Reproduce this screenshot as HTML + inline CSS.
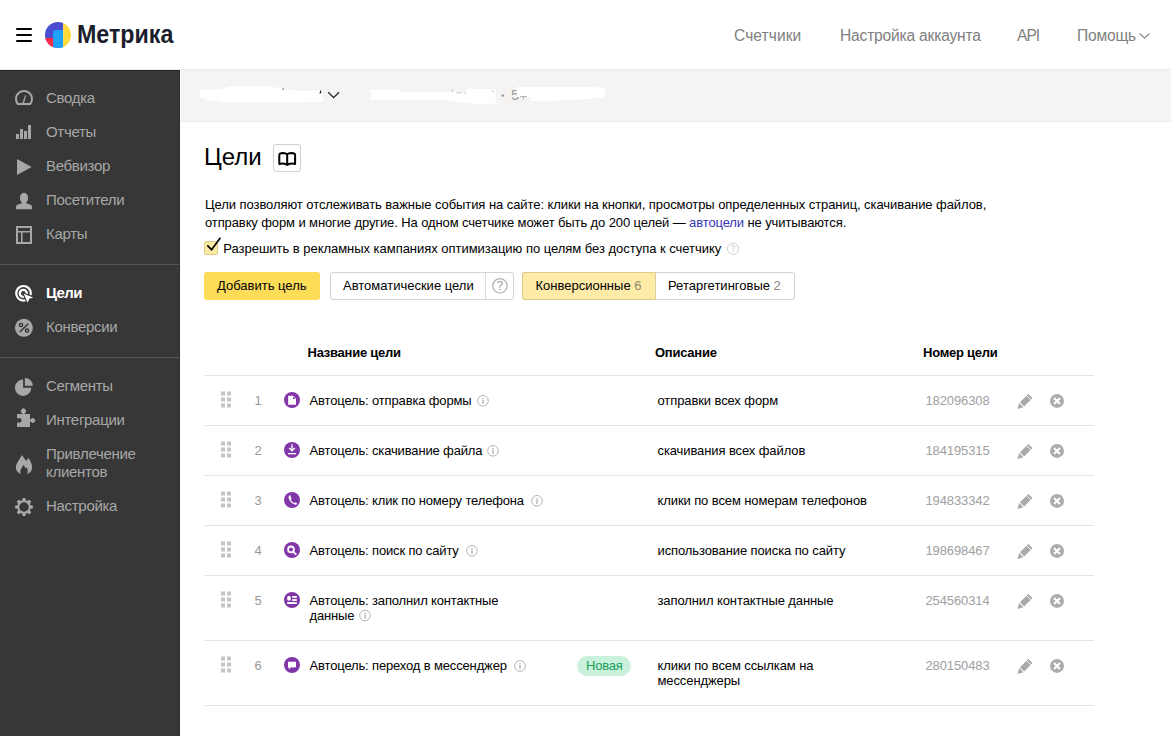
<!DOCTYPE html>
<html><head><meta charset="utf-8"><style>
html,body{margin:0;padding:0;width:1171px;height:736px;overflow:hidden;background:#fff;}
body{position:relative;font-family:"Liberation Sans",sans-serif;}
.t{position:absolute;white-space:nowrap;}
.r{position:absolute;}
svg{position:absolute;left:0;top:0;}
</style></head><body>
<div class="r" style="left:0;top:69px;width:1171px;height:1px;background:#e9e9e9"></div>
<div class="r" style="left:0;top:70px;width:180px;height:666px;background:#373737"></div>
<div class="r" style="left:0;top:70px;width:180px;height:1px;background:#262626"></div>
<div class="r" style="left:179px;top:70px;width:1px;height:666px;background:#2e2e2e"></div>
<div class="r" style="left:181px;top:70px;width:990px;height:51px;background:#f5f4f2"></div>
<div class="r" style="left:181px;top:121px;width:990px;height:1px;background:#ebebeb"></div>
<div class="r" style="left:0;top:264px;width:179px;height:1px;background:#565656"></div>
<div class="r" style="left:0;top:357px;width:179px;height:1px;background:#565656"></div>
<div class="t" style="left:77px;top:19.37px;font-size:26.5px;line-height:30.5px;color:#1b1e2a;font-weight:700;transform:scaleX(0.877);transform-origin:0 0;">Метрика</div>
<div class="t" style="left:734px;top:25.99px;font-size:15.6px;line-height:19.6px;color:#808080;letter-spacing:0.05px;">Счетчики</div>
<div class="t" style="left:840px;top:25.99px;font-size:15.6px;line-height:19.6px;color:#808080;letter-spacing:-0.2px;">Настройка аккаунта</div>
<div class="t" style="left:1017px;top:25.99px;font-size:15.6px;line-height:19.6px;color:#808080;letter-spacing:-1px;">API</div>
<div class="t" style="left:1077px;top:25.99px;font-size:15.6px;line-height:19.6px;color:#808080;letter-spacing:-0.2px;">Помощь</div>
<div class="t" style="left:46px;top:88.30px;font-size:15px;line-height:19px;color:#a7a7a7;letter-spacing:-0.3px;">Сводка</div>
<div class="t" style="left:46px;top:122.30px;font-size:15px;line-height:19px;color:#a7a7a7;letter-spacing:-0.3px;">Отчеты</div>
<div class="t" style="left:46px;top:156.30px;font-size:15px;line-height:19px;color:#a7a7a7;letter-spacing:-0.3px;">Вебвизор</div>
<div class="t" style="left:46px;top:190.30px;font-size:15px;line-height:19px;color:#a7a7a7;letter-spacing:-0.3px;">Посетители</div>
<div class="t" style="left:46px;top:224.30px;font-size:15px;line-height:19px;color:#a7a7a7;letter-spacing:-0.3px;">Карты</div>
<div class="t" style="left:46px;top:317.30px;font-size:15px;line-height:19px;color:#a7a7a7;letter-spacing:-0.3px;">Конверсии</div>
<div class="t" style="left:46px;top:376.30px;font-size:15px;line-height:19px;color:#a7a7a7;letter-spacing:-0.3px;">Сегменты</div>
<div class="t" style="left:46px;top:410.30px;font-size:15px;line-height:19px;color:#a7a7a7;letter-spacing:-0.3px;">Интеграции</div>
<div class="t" style="left:46px;top:443.80px;font-size:15px;line-height:19px;color:#a7a7a7;letter-spacing:-0.3px;">Привлечение</div>
<div class="t" style="left:46px;top:461.80px;font-size:15px;line-height:19px;color:#a7a7a7;letter-spacing:-0.3px;">клиентов</div>
<div class="t" style="left:46px;top:496.30px;font-size:15px;line-height:19px;color:#a7a7a7;letter-spacing:-0.3px;">Настройка</div>
<div class="t" style="left:46px;top:282.80px;font-size:15px;line-height:19px;color:#fff;font-weight:700;letter-spacing:-0.6px;">Цели</div>
<div class="t" style="left:511px;top:85.10px;font-size:15px;line-height:19px;color:#9c9c9c;">5</div>
<div class="t" style="left:204px;top:143.18px;font-size:24px;line-height:28px;color:#000;">Цели</div>
<div class="r" style="left:273px;top:144px;width:26px;height:26px;border:1px solid #d0d0d0;border-radius:3px;"></div>
<div class="t" style="left:205px;top:196.00px;font-size:13px;line-height:17px;color:#000;letter-spacing:-0.07px;">Цели позволяют отслеживать важные события на сайте: клики на кнопки, просмотры определенных страниц, скачивание файлов,</div>
<div class="t" style="left:205px;top:213.50px;font-size:13px;line-height:17px;color:#000;letter-spacing:-0.11px;">отправку форм и многие другие. На одном счетчике может быть до 200 целей — <span style="color:#3436b4">автоцели</span> не учитываются.</div>
<div class="r" style="left:204px;top:241px;width:12px;height:12px;border:1px solid #dccb86;border-radius:2px;background:#fdeaa4"></div>
<div class="t" style="left:223.3px;top:240.00px;font-size:13px;line-height:17px;color:#000;letter-spacing:-0.03px;">Разрешить в рекламных кампаниях оптимизацию по целям без доступа к счетчику</div>
<div class="r" style="left:204px;top:272px;width:116px;height:28px;background:#fddc58;border-radius:3px"></div>
<div class="t" style="left:217px;top:276.50px;font-size:13px;line-height:17px;color:#000;">Добавить цель</div>
<div class="r" style="left:330px;top:272px;width:182px;height:26px;border:1px solid #d3d3d3;border-radius:3px"></div>
<div class="r" style="left:485px;top:273px;width:1px;height:26px;background:#dcdcdc"></div>
<div class="t" style="left:343px;top:276.50px;font-size:13px;line-height:17px;color:#000;">Автоматические цели</div>
<div class="r" style="left:522px;top:272px;width:271px;height:26px;border:1px solid #d3d3d3;border-radius:3px;overflow:hidden"><div style="position:absolute;left:0;top:0;width:133px;height:26px;background:#feeba8;"></div></div>
<div class="r" style="left:522px;top:272px;width:134px;height:28px;border-radius:3px 0 0 3px;box-sizing:border-box;border:1px solid #dccb8c;border-right:1px solid #d8cf9f;background:#feeba8"></div>
<div class="t" style="left:535.5px;top:276.50px;font-size:13px;line-height:17px;color:#000;">Конверсионные <span style="color:#8a8a6a">6</span></div>
<div class="t" style="left:668px;top:276.50px;font-size:13px;line-height:17px;color:#000;">Ретаргетинговые <span style="color:#888">2</span></div>
<div class="t" style="left:307.5px;top:343.80px;font-size:13px;line-height:17px;color:#000;font-weight:700;letter-spacing:-0.25px;">Название цели</div>
<div class="t" style="left:655px;top:343.80px;font-size:13px;line-height:17px;color:#000;font-weight:700;letter-spacing:-0.25px;">Описание</div>
<div class="t" style="left:923px;top:343.80px;font-size:13px;line-height:17px;color:#000;font-weight:700;letter-spacing:-0.25px;">Номер цели</div>
<div class="r" style="left:204px;top:375px;width:890px;height:1px;background:#e4e4e4"></div>
<div class="r" style="left:204px;top:425px;width:890px;height:1px;background:#e4e4e4"></div>
<div class="r" style="left:204px;top:475px;width:890px;height:1px;background:#e4e4e4"></div>
<div class="r" style="left:204px;top:525px;width:890px;height:1px;background:#e4e4e4"></div>
<div class="r" style="left:204px;top:575px;width:890px;height:1px;background:#e4e4e4"></div>
<div class="r" style="left:204px;top:640px;width:890px;height:1px;background:#e4e4e4"></div>
<div class="r" style="left:204px;top:705px;width:890px;height:1px;background:#e4e4e4"></div>
<div class="t" style="left:254.5px;top:392.00px;font-size:13px;line-height:17px;color:#999;">1</div>
<div class="t" style="left:309.5px;top:392.00px;font-size:13px;line-height:17px;color:#000;letter-spacing:-0.15px;">Автоцель: отправка формы</div>
<div class="t" style="left:657.5px;top:392.00px;font-size:13px;line-height:17px;color:#000;letter-spacing:-0.1px;">отправки всех форм</div>
<div class="t" style="left:925.5px;top:392.00px;font-size:13px;line-height:17px;color:#a0a0a0;letter-spacing:-0.12px;">182096308</div>
<div class="t" style="left:254.5px;top:442.00px;font-size:13px;line-height:17px;color:#999;">2</div>
<div class="t" style="left:309.5px;top:442.00px;font-size:13px;line-height:17px;color:#000;letter-spacing:-0.15px;">Автоцель: скачивание файла</div>
<div class="t" style="left:657.5px;top:442.00px;font-size:13px;line-height:17px;color:#000;letter-spacing:-0.1px;">скачивания всех файлов</div>
<div class="t" style="left:925.5px;top:442.00px;font-size:13px;line-height:17px;color:#a0a0a0;letter-spacing:-0.12px;">184195315</div>
<div class="t" style="left:254.5px;top:492.00px;font-size:13px;line-height:17px;color:#999;">3</div>
<div class="t" style="left:309.5px;top:492.00px;font-size:13px;line-height:17px;color:#000;letter-spacing:-0.15px;">Автоцель: клик по номеру телефона</div>
<div class="t" style="left:657.5px;top:492.00px;font-size:13px;line-height:17px;color:#000;letter-spacing:-0.1px;">клики по всем номерам телефонов</div>
<div class="t" style="left:925.5px;top:492.00px;font-size:13px;line-height:17px;color:#a0a0a0;letter-spacing:-0.12px;">194833342</div>
<div class="t" style="left:254.5px;top:542.00px;font-size:13px;line-height:17px;color:#999;">4</div>
<div class="t" style="left:309.5px;top:542.00px;font-size:13px;line-height:17px;color:#000;letter-spacing:-0.15px;">Автоцель: поиск по сайту</div>
<div class="t" style="left:657.5px;top:542.00px;font-size:13px;line-height:17px;color:#000;letter-spacing:-0.1px;">использование поиска по сайту</div>
<div class="t" style="left:925.5px;top:542.00px;font-size:13px;line-height:17px;color:#a0a0a0;letter-spacing:-0.12px;">198698467</div>
<div class="t" style="left:254.5px;top:592.00px;font-size:13px;line-height:17px;color:#999;">5</div>
<div class="t" style="left:309.5px;top:592.00px;font-size:13px;line-height:17px;color:#000;letter-spacing:-0.15px;">Автоцель: заполнил контактные</div>
<div class="t" style="left:309.5px;top:607.00px;font-size:13px;line-height:17px;color:#000;letter-spacing:-0.15px;">данные</div>
<div class="t" style="left:657.5px;top:592.00px;font-size:13px;line-height:17px;color:#000;letter-spacing:-0.1px;">заполнил контактные данные</div>
<div class="t" style="left:925.5px;top:592.00px;font-size:13px;line-height:17px;color:#a0a0a0;letter-spacing:-0.12px;">254560314</div>
<div class="t" style="left:254.5px;top:657.00px;font-size:13px;line-height:17px;color:#999;">6</div>
<div class="t" style="left:309.5px;top:657.00px;font-size:13px;line-height:17px;color:#000;letter-spacing:-0.15px;">Автоцель: переход в мессенджер</div>
<div class="t" style="left:657.5px;top:657.00px;font-size:13px;line-height:17px;color:#000;letter-spacing:-0.1px;">клики по всем ссылкам на</div>
<div class="t" style="left:657.5px;top:672.00px;font-size:13px;line-height:17px;color:#000;letter-spacing:-0.1px;">мессенджеры</div>
<div class="t" style="left:925.5px;top:657.00px;font-size:13px;line-height:17px;color:#a0a0a0;letter-spacing:-0.12px;">280150483</div>
<div class="r" style="left:577px;top:656px;width:54px;height:20px;border-radius:10px;background:#c9f1dc"></div>
<div class="t" style="left:586px;top:656.70px;font-size:13px;line-height:17px;color:#1aa05b;letter-spacing:-0.2px;">Новая</div>
<svg width="1171" height="736" viewBox="0 0 1171 736"><rect x="16" y="28" width="16" height="2" rx="1" fill="#000"/><rect x="16" y="34" width="16" height="2" rx="1" fill="#000"/><rect x="16" y="40" width="16" height="2" rx="1" fill="#000"/><defs><clipPath id="lc"><circle cx="58" cy="35" r="13"/></clipPath></defs><g clip-path="url(#lc)"><rect x="45" y="22" width="18" height="26" fill="#4a4cd2"/><rect x="45" y="38" width="8.3" height="10" fill="#ff2a44"/><path d="M53.1,33 Q53.1,30 56,30 L63.1,30 L63.1,48 L53.1,48 Z" fill="#1ea2f7"/><rect x="63.1" y="22" width="9" height="26" fill="#ffd83a"/></g><path d="M1139.5,33.5 L1144.5,38 L1149.5,33.5" fill="none" stroke="#888" stroke-width="1.1"/><path d="M17.8,104 A8,8 0 1 1 30.2,104 Z" fill="none" stroke="#a7a7a7" stroke-width="2"/><path d="M22.2,103.5 L25.2,95 L26,95.4 L24,103.5 Z" fill="#a7a7a7"/><rect x="16" y="134" width="3" height="5" fill="#a7a7a7"/><rect x="20" y="129" width="3" height="10" fill="#a7a7a7"/><rect x="24" y="131" width="3" height="8" fill="#a7a7a7"/><rect x="28" y="125" width="3" height="14" fill="#a7a7a7"/><path d="M17,159 L17,175 L31.7,167 Z" fill="#a7a7a7"/><ellipse cx="24" cy="198" rx="4.1" ry="5.2" fill="#a7a7a7"/><path d="M16,209.2 L16,207 Q16,204.6 19.5,204 L22,203 L26,203 L28.5,204 Q32,204.6 32,207 L32,209.2 Z" fill="#a7a7a7"/><rect x="17" y="227" width="14" height="16" fill="none" stroke="#a7a7a7" stroke-width="2"/><rect x="18" y="231" width="12" height="1.5" fill="#a7a7a7"/><rect x="21" y="232" width="1.5" height="10" fill="#a7a7a7"/><circle cx="23.5" cy="293.3" r="7.3" fill="none" stroke="#fff" stroke-width="2.2"/><circle cx="23.3" cy="293.4" r="3.5" fill="none" stroke="#fff" stroke-width="2.4"/><path d="M23.7,293.8 L33.2,297.4 L29.3,298.8 L27.6,302.8 Z" fill="#fff" stroke="#373737" stroke-width="2.2" stroke-linejoin="round"/><path d="M23.7,293.8 L33.2,297.4 L29.3,298.8 L27.6,302.8 Z" fill="#fff"/><circle cx="23.9" cy="327.8" r="9" fill="#a7a7a7"/><circle cx="21" cy="325" r="1.6" fill="none" stroke="#373737" stroke-width="1.4"/><circle cx="27" cy="330.6" r="1.6" fill="none" stroke="#373737" stroke-width="1.4"/><path d="M19.8,332 L28.2,323.8" stroke="#373737" stroke-width="1.5"/><path d="M23.1,387.7 L23.1,379.5 A8.2,8.2 0 1 0 31.3,387.7 Z" fill="#a7a7a7"/><path d="M24.9,385.8 L24.9,377.9 A7.9,7.9 0 0 1 32.8,385.8 Z" fill="#a7a7a7"/><path d="M17,414 L22.2,414 L22.2,413.2 A2.5,2.5 0 1 1 24.7,413.2 L24.7,414 L30,414 L30,419.2 L30.8,419.2 A2.3,2.3 0 1 1 30.8,421.6 L30,421.6 L30,427 L17,427 L17,422.6 L18.6,422.6 A2.3,2.3 0 1 0 18.6,418.2 L17,418.2 Z" fill="#a7a7a7"/><path d="M21.8,455 C23.5,457.5 25.5,459.5 26.2,461 C27.2,459.8 27.8,458.8 28.4,458 C30.5,460.5 32.2,464 32.1,467.5 C32,471 30.2,473 27.2,474 C28,471.5 27.8,469 26.6,467.3 C26.2,468.2 25.8,468.4 25.2,468.2 C24.8,466.5 24,465.3 23.3,465 C22.5,466.8 20.6,469 20.4,471 C20.3,472.3 20.8,473.4 21.3,474 C17.8,473.2 15.9,470.6 15.9,467.5 C15.9,463 19.8,459.8 21.8,455 Z" fill="#a7a7a7"/><path d="M21.91,500.74 L22.71,498.09 L25.29,498.09 L26.09,500.74 L26.95,501.10 L29.39,499.79 L31.21,501.61 L29.90,504.05 L30.26,504.91 L32.91,505.71 L32.91,508.29 L30.26,509.09 L29.90,509.95 L31.21,512.39 L29.39,514.21 L26.95,512.90 L26.09,513.26 L25.29,515.91 L22.71,515.91 L21.91,513.26 L21.05,512.90 L18.61,514.21 L16.79,512.39 L18.10,509.95 L17.74,509.09 L15.09,508.29 L15.09,505.71 L17.74,504.91 L18.10,504.05 L16.79,501.61 L18.61,499.79 L21.05,501.10Z" fill="#a7a7a7"/><circle cx="24" cy="507" r="4.7" fill="#373737"/><path d="M328.2,92.2 L333.6,97.6 L339,92.2" fill="none" stroke="#222" stroke-width="1.3"/><path d="M200,89.6 L222,89.6 L222,88.5 L227,88.5 L227,86.8 L236,86.8 L236,86 L265,85.8 L298,90.9 L323,91 L323,102 L218,102.2 L218,100.5 L205,100.5 L205,97.8 L200,97.8 Z" fill="#fff"/><path d="M370.8,89.6 L400,89.6 L400,92 L467,92 L467,88.9 L495.7,88.9 L495.7,103.7 L474,103.7 L458,102 L446.8,100.3 L440,99.8 L370.8,99.8 Z" fill="#fff"/><path d="M516.7,87 L597,87 L597,88 L605,88 L605,97.4 L592,97.4 L592,98.8 L575,99.7 L555,100.7 L531,100.7 L531,96.9 L516.7,96.9 Z" fill="#fff"/><circle cx="502.8" cy="95.6" r="1.3" fill="#9c9c9c"/><path d="M520,96.6 L527,96.6 M523.5,96.6 L523.5,99.5" stroke="#b0b0b0" stroke-width="1"/><path d="M452.5,89 L452.5,92 M456,92.8 L462,92.8 M464,92.8 L466,93.5" stroke="#c8c8c8" stroke-width="1"/><path d="M491.5,90 L494,92.5" stroke="#b8b8b8" stroke-width="0.9"/><rect x="282.5" y="88.5" width="1.2" height="1.2" fill="#333"/><path d="M319.5,92.8 L321.5,92.8 M320.5,90.5 L320.5,92.8" stroke="#222" stroke-width="1"/><path d="M279.3,155 Q279.3,153.1 283,153 Q286,153 287.2,154.5 Q288.4,153 291.4,153 Q295.1,153.1 295.1,155 L295.1,164 Q291,162.9 287.2,164.9 Q283.4,162.9 279.3,164 Z M287.2,154.5 L287.2,164.9" fill="none" stroke="#000" stroke-width="2" stroke-linejoin="round"/><path d="M207.3,245.4 L211.6,249.7 L220.4,237.8" fill="none" stroke="#000" stroke-width="1.7"/><circle cx="733" cy="248.8" r="5.6" fill="none" stroke="#d2d2d2" stroke-width="1"/><path d="M731.2,247 Q731.4,245.6 733.1,245.6 Q734.8,245.6 734.8,247 Q734.8,248 733.5,248.6 L733,249.1 L733,250.2" fill="none" stroke="#cdcdcd" stroke-width="1"/><rect x="732.4" y="251" width="1.2" height="1" fill="#cdcdcd"/><circle cx="499.9" cy="285.8" r="7.2" fill="none" stroke="#b3b3b3" stroke-width="1.2"/><path d="M497.5,283.2 Q497.8,281.4 500.1,281.4 Q502.4,281.4 502.4,283.2 Q502.4,284.5 500.8,285.3 L499.9,286 L499.9,287.8" fill="none" stroke="#aaa" stroke-width="1.2"/><rect x="499.2" y="289" width="1.5" height="1.3" fill="#aaa"/><rect x="221" y="391.5" width="4" height="4" fill="#c4c4c4"/><rect x="221" y="397.5" width="4" height="4" fill="#c4c4c4"/><rect x="221" y="403.5" width="4" height="4" fill="#c4c4c4"/><rect x="227" y="391.5" width="4" height="4" fill="#c4c4c4"/><rect x="227" y="397.5" width="4" height="4" fill="#c4c4c4"/><rect x="227" y="403.5" width="4" height="4" fill="#c4c4c4"/><circle cx="292" cy="400" r="8" fill="#8237a8"/><g transform="translate(0,0.39999999999997726)"><path d="M1017.5,408.6 L1019.2,402.6 L1023.4,406.8 Z M1020,401.8 L1028.3,393.5 L1032.5,397.7 L1024.2,406 Z" fill="#a9a9a9"/><path d="M1026.6,395.2 L1030.8,399.4" stroke="#fff" stroke-width="0.9"/></g><circle cx="1057" cy="400.9" r="7" fill="#acacac"/><path d="M1054,397.9 L1060,403.9 M1060,397.9 L1054,403.9" stroke="#fff" stroke-width="2.1"/><rect x="221" y="441.5" width="4" height="4" fill="#c4c4c4"/><rect x="221" y="447.5" width="4" height="4" fill="#c4c4c4"/><rect x="221" y="453.5" width="4" height="4" fill="#c4c4c4"/><rect x="227" y="441.5" width="4" height="4" fill="#c4c4c4"/><rect x="227" y="447.5" width="4" height="4" fill="#c4c4c4"/><rect x="227" y="453.5" width="4" height="4" fill="#c4c4c4"/><circle cx="292" cy="450" r="8" fill="#8237a8"/><g transform="translate(0,50.39999999999998)"><path d="M1017.5,408.6 L1019.2,402.6 L1023.4,406.8 Z M1020,401.8 L1028.3,393.5 L1032.5,397.7 L1024.2,406 Z" fill="#a9a9a9"/><path d="M1026.6,395.2 L1030.8,399.4" stroke="#fff" stroke-width="0.9"/></g><circle cx="1057" cy="450.9" r="7" fill="#acacac"/><path d="M1054,447.9 L1060,453.9 M1060,447.9 L1054,453.9" stroke="#fff" stroke-width="2.1"/><rect x="221" y="491.5" width="4" height="4" fill="#c4c4c4"/><rect x="221" y="497.5" width="4" height="4" fill="#c4c4c4"/><rect x="221" y="503.5" width="4" height="4" fill="#c4c4c4"/><rect x="227" y="491.5" width="4" height="4" fill="#c4c4c4"/><rect x="227" y="497.5" width="4" height="4" fill="#c4c4c4"/><rect x="227" y="503.5" width="4" height="4" fill="#c4c4c4"/><circle cx="292" cy="500" r="8" fill="#8237a8"/><g transform="translate(0,100.39999999999998)"><path d="M1017.5,408.6 L1019.2,402.6 L1023.4,406.8 Z M1020,401.8 L1028.3,393.5 L1032.5,397.7 L1024.2,406 Z" fill="#a9a9a9"/><path d="M1026.6,395.2 L1030.8,399.4" stroke="#fff" stroke-width="0.9"/></g><circle cx="1057" cy="500.9" r="7" fill="#acacac"/><path d="M1054,497.9 L1060,503.9 M1060,497.9 L1054,503.9" stroke="#fff" stroke-width="2.1"/><rect x="221" y="541.5" width="4" height="4" fill="#c4c4c4"/><rect x="221" y="547.5" width="4" height="4" fill="#c4c4c4"/><rect x="221" y="553.5" width="4" height="4" fill="#c4c4c4"/><rect x="227" y="541.5" width="4" height="4" fill="#c4c4c4"/><rect x="227" y="547.5" width="4" height="4" fill="#c4c4c4"/><rect x="227" y="553.5" width="4" height="4" fill="#c4c4c4"/><circle cx="292" cy="550" r="8" fill="#8237a8"/><g transform="translate(0,150.39999999999998)"><path d="M1017.5,408.6 L1019.2,402.6 L1023.4,406.8 Z M1020,401.8 L1028.3,393.5 L1032.5,397.7 L1024.2,406 Z" fill="#a9a9a9"/><path d="M1026.6,395.2 L1030.8,399.4" stroke="#fff" stroke-width="0.9"/></g><circle cx="1057" cy="550.9" r="7" fill="#acacac"/><path d="M1054,547.9 L1060,553.9 M1060,547.9 L1054,553.9" stroke="#fff" stroke-width="2.1"/><rect x="221" y="591.5" width="4" height="4" fill="#c4c4c4"/><rect x="221" y="597.5" width="4" height="4" fill="#c4c4c4"/><rect x="221" y="603.5" width="4" height="4" fill="#c4c4c4"/><rect x="227" y="591.5" width="4" height="4" fill="#c4c4c4"/><rect x="227" y="597.5" width="4" height="4" fill="#c4c4c4"/><rect x="227" y="603.5" width="4" height="4" fill="#c4c4c4"/><circle cx="292" cy="600" r="8" fill="#8237a8"/><g transform="translate(0,200.39999999999998)"><path d="M1017.5,408.6 L1019.2,402.6 L1023.4,406.8 Z M1020,401.8 L1028.3,393.5 L1032.5,397.7 L1024.2,406 Z" fill="#a9a9a9"/><path d="M1026.6,395.2 L1030.8,399.4" stroke="#fff" stroke-width="0.9"/></g><circle cx="1057" cy="600.9" r="7" fill="#acacac"/><path d="M1054,597.9 L1060,603.9 M1060,597.9 L1054,603.9" stroke="#fff" stroke-width="2.1"/><rect x="221" y="656.5" width="4" height="4" fill="#c4c4c4"/><rect x="221" y="662.5" width="4" height="4" fill="#c4c4c4"/><rect x="221" y="668.5" width="4" height="4" fill="#c4c4c4"/><rect x="227" y="656.5" width="4" height="4" fill="#c4c4c4"/><rect x="227" y="662.5" width="4" height="4" fill="#c4c4c4"/><rect x="227" y="668.5" width="4" height="4" fill="#c4c4c4"/><circle cx="292" cy="665" r="8" fill="#8237a8"/><g transform="translate(0,265.4)"><path d="M1017.5,408.6 L1019.2,402.6 L1023.4,406.8 Z M1020,401.8 L1028.3,393.5 L1032.5,397.7 L1024.2,406 Z" fill="#a9a9a9"/><path d="M1026.6,395.2 L1030.8,399.4" stroke="#fff" stroke-width="0.9"/></g><circle cx="1057" cy="665.9" r="7" fill="#acacac"/><path d="M1054,662.9 L1060,668.9 M1060,662.9 L1054,668.9" stroke="#fff" stroke-width="2.1"/><circle cx="483" cy="400.8" r="5.3" fill="none" stroke="#b5b5b5" stroke-width="1"/><rect x="482.3" y="398.0" width="1.4" height="1.2" fill="#b0b0b0"/><rect x="482.3" y="399.8" width="1.4" height="4" fill="#b0b0b0"/><circle cx="493" cy="450.8" r="5.3" fill="none" stroke="#b5b5b5" stroke-width="1"/><rect x="492.3" y="448.0" width="1.4" height="1.2" fill="#b0b0b0"/><rect x="492.3" y="449.8" width="1.4" height="4" fill="#b0b0b0"/><circle cx="537" cy="500.8" r="5.3" fill="none" stroke="#b5b5b5" stroke-width="1"/><rect x="536.3" y="498.0" width="1.4" height="1.2" fill="#b0b0b0"/><rect x="536.3" y="499.8" width="1.4" height="4" fill="#b0b0b0"/><circle cx="472" cy="550.8" r="5.3" fill="none" stroke="#b5b5b5" stroke-width="1"/><rect x="471.3" y="548.0" width="1.4" height="1.2" fill="#b0b0b0"/><rect x="471.3" y="549.8" width="1.4" height="4" fill="#b0b0b0"/><circle cx="365" cy="615.5" r="5.3" fill="none" stroke="#b5b5b5" stroke-width="1"/><rect x="364.3" y="612.7" width="1.4" height="1.2" fill="#b0b0b0"/><rect x="364.3" y="614.5" width="1.4" height="4" fill="#b0b0b0"/><circle cx="520" cy="666" r="5.3" fill="none" stroke="#b5b5b5" stroke-width="1"/><rect x="519.3" y="663.2" width="1.4" height="1.2" fill="#b0b0b0"/><rect x="519.3" y="665" width="1.4" height="4" fill="#b0b0b0"/><path d="M288.2,395.8 L293.3,395.8 L296,398.6 L296,404.8 L288.2,404.8 Z" fill="#fff"/><path d="M293,396.3 L295.5,398.9 L293,398.9 Z" fill="#8237a8"/><path d="M292,444.3 L292,450.6 M289.2,448 L292,450.8 L294.8,448" fill="none" stroke="#fff" stroke-width="1.3"/><rect x="288" y="453" width="8" height="1.3" fill="#fff"/><path d="M289.2,495.5 C288.3,496.2 288.3,498.3 289.8,500.6 C291.4,503 293.8,504.7 295.6,504.8 C296.6,504.8 297.2,504.2 297,503.3 L295.6,502.5 C295,502.2 294.5,502.6 294.2,503 C293,502.5 291,500.6 290.8,499.4 C291.2,499 291.6,498.6 291.3,498 L290.3,495.6 C290,495.2 289.6,495.2 289.2,495.5 Z" fill="#fff"/><circle cx="291" cy="549.4" r="2.9" fill="none" stroke="#fff" stroke-width="1.8"/><path d="M293.3,551.8 L296.3,554.6" stroke="#fff" stroke-width="1.8"/><ellipse cx="289" cy="598.3" rx="1.9" ry="2.5" fill="#fff"/><rect x="292.2" y="596" width="4.6" height="1.9" fill="#fff"/><rect x="292.2" y="599.1" width="4.6" height="1.9" fill="#fff"/><rect x="287.2" y="602.1" width="9.6" height="1.9" fill="#fff"/><path d="M288,661.7 L296,661.7 L296,667.3 L290.5,667.6 L289,669.2 L288.6,667.6 L288,667.4 Z" fill="#fff"/></svg>
</body></html>
